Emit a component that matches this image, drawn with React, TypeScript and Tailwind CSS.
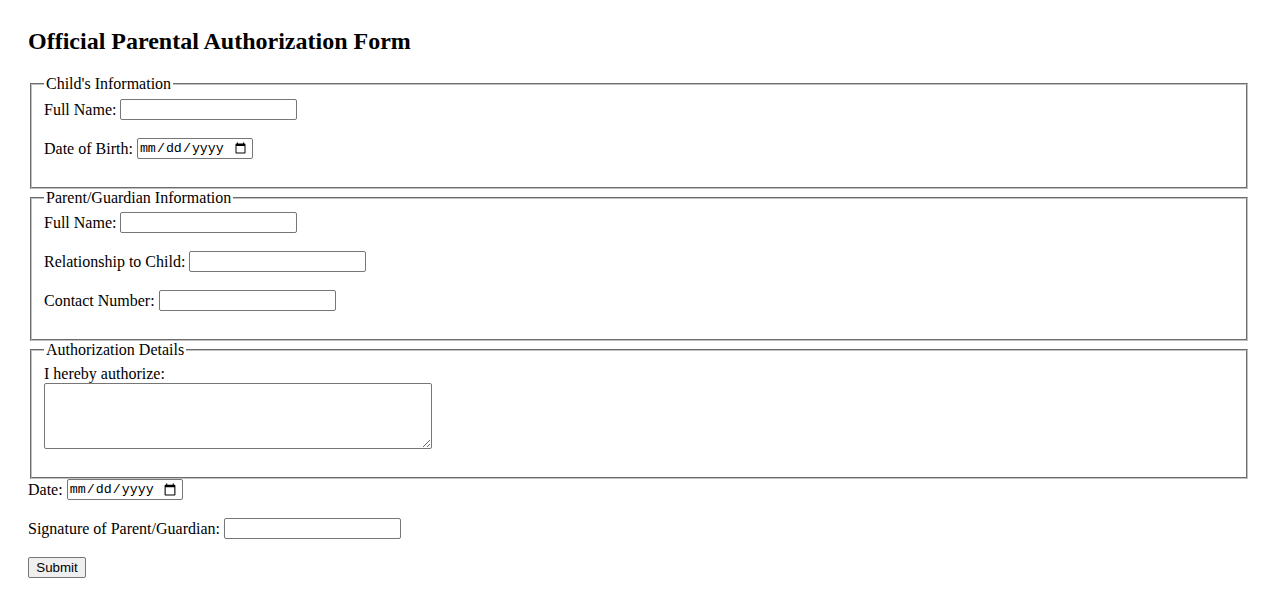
import React from "react";

const serif = "font-['Liberation_Serif','Times_New_Roman',serif]";
const textInput =
  "w-[177px] h-[21px] border border-[#767676] rounded-[2px] bg-white px-[2px] py-[1px] font-['Liberation_Sans',Arial,sans-serif] text-[13.33px] leading-[normal]";
const dateInput =
  "w-[116px] h-[21px] border border-[#767676] rounded-[2px] bg-white pl-[1px] pr-[3px] py-[1px] font-['Liberation_Mono','Courier_New',monospace] text-[13.33px] leading-[normal] text-black";
const fieldsetBase =
  "mx-[2px] [border:2px_groove_#c0c0c0] px-[12px] pb-[10px] min-w-0";
const legend = "px-[2px] leading-[normal]";

function Row({
  label,
  children,
}: {
  label: string;
  children: React.ReactNode;
}) {
  return (
    <div className="flex items-center gap-[4px] h-[21px] mb-[18px]">
      <label className="leading-[normal] whitespace-nowrap">{label}</label>
      {children}
    </div>
  );
}

export default function App() {
  return (
    <div className={`${serif} text-[16px] leading-[normal] text-black bg-white min-h-screen px-[28px] pt-[28px]`}>
      <h2 className="text-[24px] font-bold leading-[normal] mb-[20px]">
        Official Parental Authorization Form
      </h2>
      <form onSubmit={(e) => e.preventDefault()}>
        <fieldset className={`${fieldsetBase} pt-[6px]`}>
          <legend className={legend}>Child's Information</legend>
          <Row label="Full Name:">
            <input type="text" className={textInput} />
          </Row>
          <Row label="Date of Birth:">
            <input type="date" className={dateInput} />
          </Row>
        </fieldset>
        <fieldset className={`${fieldsetBase} pt-[5px]`}>
          <legend className={legend}>Parent/Guardian Information</legend>
          <Row label="Full Name:">
            <input type="text" className={textInput} />
          </Row>
          <Row label="Relationship to Child:">
            <input type="text" className={textInput} />
          </Row>
          <Row label="Contact Number:">
            <input type="text" className={textInput} />
          </Row>
        </fieldset>
        <fieldset className={`${fieldsetBase} pt-[6px]`}>
          <legend className={legend}>Authorization Details</legend>
          <label className="block leading-[normal]">I hereby authorize:</label>
          <textarea className="block mb-[18px] w-[388px] h-[66px] border border-[#767676] rounded-[2px] bg-white p-[2px] font-['Liberation_Mono',monospace] text-[13.33px]" />
        </fieldset>
        <div>
          <Row label="Date:">
            <input type="date" className={dateInput} />
          </Row>
          <Row label="Signature of Parent/Guardian:">
            <input type="text" className={textInput} />
          </Row>
          <div className="h-[21px] flex items-center">
            <button
              type="submit"
              className="w-[58px] h-[21px] border border-[#767676] rounded-[2px] bg-[#efefef] px-[6px] py-[1px] font-['Liberation_Sans',Arial,sans-serif] text-[13.33px] leading-[normal] text-black"
            >
              Submit
            </button>
          </div>
        </div>
      </form>
    </div>
  );
}
